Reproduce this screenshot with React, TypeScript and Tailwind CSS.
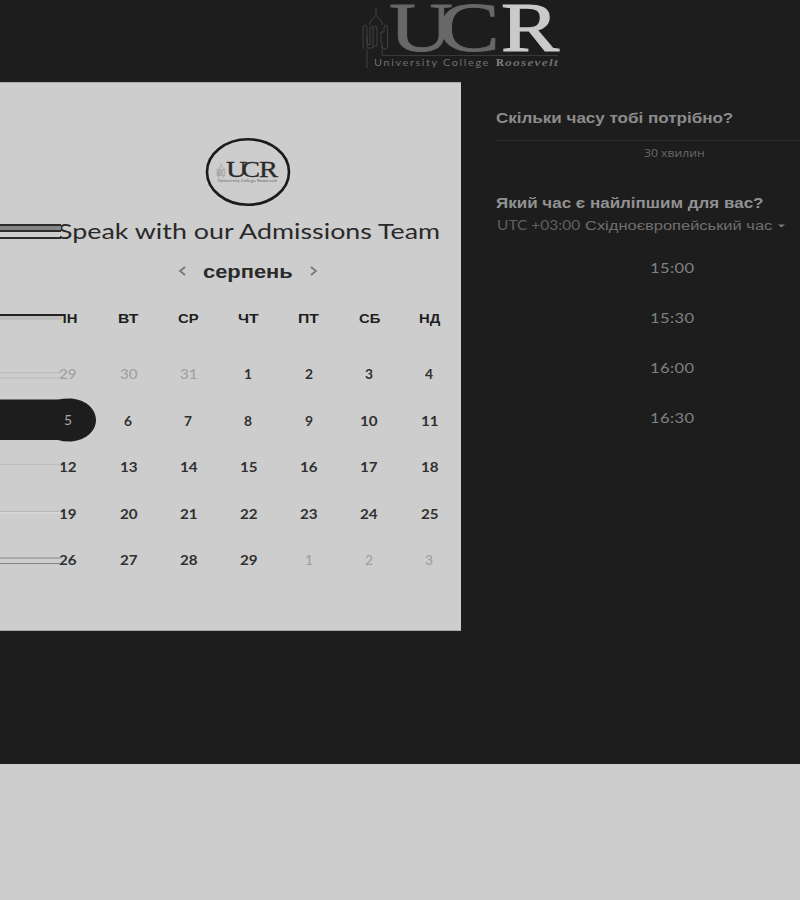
import { useLayoutEffect, useRef, useState } from 'react';
import type { ReactNode } from 'react';

/** Single line of text stretched horizontally to a given width. */
function Fit({ w, className = '', children }: { w: number; className?: string; children: ReactNode }) {
  const ref = useRef<HTMLSpanElement>(null);
  const [scale, setScale] = useState(1);
  useLayoutEffect(() => {
    if (ref.current) setScale(w / ref.current.offsetWidth);
  }, [w]);
  return (
    <span className={`block shrink-0 ${className}`} style={{ width: w }}>
      <span ref={ref} className="inline-block origin-left whitespace-nowrap" style={{ transform: `scaleX(${scale})` }}>
        {children}
      </span>
    </span>
  );
}

const latin = "font-['Lato','Liberation_Sans',sans-serif]";
const cyr = "font-['Liberation_Sans',sans-serif]";

const weekdays = ['ПН', 'ВТ', 'СР', 'ЧТ', 'ПТ', 'СБ', 'НД'];
const weeks = [
  [29, 30, 31, 1, 2, 3, 4],
  [5, 6, 7, 8, 9, 10, 11],
  [12, 13, 14, 15, 16, 17, 18],
  [19, 20, 21, 22, 23, 24, 25],
  [26, 27, 28, 29, 1, 2, 3],
];
const times = ['15:00', '15:30', '16:00', '16:30'];

function Tower() {
  return (
    <g fill="none" strokeWidth="1">
      <path d="M26 7v9M20 25v-3q1-2 3-3l3-4 3 4q2 1 3 3v3" />
      <path d="M17 68V50M15 49q-2-1-2-4V29q0-4 2-4t2 4v13q0 3 3 3V28q0-2 1.500-2t1.500 2v20h-6V37" />
      <path d="M23 46h4V28q0-2-1.500-2T24 28M31 43V32h3v-4q0-3 1.500-3t2 3v18q0 3-2.500 3t-3-3M32 43v12" />
    </g>
  );
}

function HeaderLogo() {
  return (
    <svg className="ml-[350px] block" width="220" height="82" viewBox="0 0 220 82">
      <g stroke="#424242"><Tower /></g>
      <path d="M32 55.500H208" stroke="#393939" />
      <g className="font-['Liberation_Serif',serif]" fontSize="70">
        <text x="39" y="51" textLength="64" fill="#686868" stroke="#686868" strokeWidth="0.800" lengthAdjust="spacingAndGlyphs">U</text>
        <text x="88" y="51" textLength="62" fill="#686868" stroke="#686868" strokeWidth="0.800" lengthAdjust="spacingAndGlyphs">C</text>
        <text x="151" y="51" textLength="58" fill="#cacaca" stroke="#cacaca" strokeWidth="1.200" lengthAdjust="spacingAndGlyphs">R</text>
      </g>
      <text x="24" y="66" className="font-['Lato',sans-serif]" fontSize="10" letterSpacing="1.500" textLength="116" lengthAdjust="spacingAndGlyphs" fill="#707070">University College</text>
      <text x="146" y="66" className="font-['Liberation_Serif',serif]" fontSize="11" fontWeight="700" fill="#858585">R</text>
      <text x="155" y="66" className="font-['Liberation_Serif',serif]" fontSize="11" fontStyle="italic" fontWeight="700" letterSpacing="1" textLength="54" lengthAdjust="spacingAndGlyphs" fill="#707070">oosevelt</text>
    </svg>
  );
}

function BadgeLogo() {
  return (
    <svg className="block" width="86" height="70" viewBox="0 0 86 70">
      <ellipse cx="43" cy="35" rx="41" ry="32.700" fill="none" stroke="#1b1b1b" strokeWidth="2.600" />
      <g transform="translate(8 24) scale(.31)" stroke="#666" strokeWidth="2"><Tower /></g>
      <g className="font-['Liberation_Serif',serif]" fontSize="22.500" fill="#2b2b2b" stroke="#2b2b2b" strokeWidth="0.300">
        <text x="21" y="39.500" textLength="21" lengthAdjust="spacingAndGlyphs">U</text>
        <text x="36.500" y="39.500" textLength="18.500" lengthAdjust="spacingAndGlyphs">C</text>
        <text x="54" y="39.500" textLength="19" lengthAdjust="spacingAndGlyphs">R</text>
      </g>
      <text x="14" y="44.500" className="font-['Lato',sans-serif]" fontSize="3.500" textLength="58" lengthAdjust="spacingAndGlyphs" fill="#666">University College Roosevelt</text>
    </svg>
  );
}

/** Streaks that run from the left edge of the card into its first column. */
function Streaks() {
  return (
    <svg className="absolute left-0 top-0" width="100" height="549" viewBox="0 83 100 549">
      <rect x="0" y="224" width="60" height="15" fill="#cdcdcd" />
      <rect x="0" y="224" width="61" height="8" fill="#2b2b2b" />
      <rect x="0" y="226" width="61" height="4" fill="#858585" />
      <rect x="0" y="237" width="61" height="2" fill="#2b2b2b" />
      <rect x="0" y="310" width="62" height="15" fill="#cdcdcd" />
      <rect x="0" y="314" width="64" height="2" fill="#222" />
      <rect x="0" y="316" width="62" height="4" fill="#bdbdbd" />
      <path d="M0 372.500H61M0 378H61" stroke="#b8b8b8" />
      <path d="M0 464.500H61" stroke="#bcbcbc" />
      <path d="M0 511.500H61" stroke="#b7b7b7" />
      <path d="M0 513H61" stroke="#d5d5d5" strokeWidth="2" />
      <path d="M0 558H61" stroke="#aaa" strokeWidth="2" />
      <path d="M0 563.500H61" stroke="#858585" />
    </svg>
  );
}

function dateStyle(row: number, value: number) {
  if (value === 5) return 'top-[-1px] text-[#a8a8a8]';
  if (row === 0 && value > 20) return 'text-[#a0a0a0] font-medium';
  if (row === 4 && value < 20) return 'text-[#a0a0a0] font-medium';
  return 'text-[#303030] font-bold';
}

function Calendar() {
  return (
    <section className="relative h-[549px] w-[461px] shrink-0 overflow-hidden border-y border-[#aaaaaa] bg-[#cdcdcd]">
      <div className="ml-[205px] mt-[54px] h-[70px]"><BadgeLogo /></div>
      <div className="ml-[58px] mt-[10px] flex h-7 items-center">
        <Fit w={382} className={`${latin} text-[21px] leading-7 text-[#292929]`}>Speak with our Admissions Team</Fit>
      </div>
      <div className="ml-[178px] mt-[12px] flex h-7 items-center">
        <svg width="8" height="10" viewBox="0 0 8 10" fill="none" stroke="#777" strokeWidth="1.700"><path d="M7 1L2 5l5 4" /></svg>
        <Fit w={90} className={`ml-[17px] mt-px ${cyr} text-[18px] font-bold leading-7 text-[#2a2a2a]`}>серпень</Fit>
        <svg className="ml-[17px]" width="8" height="10" viewBox="0 0 8 10" fill="none" stroke="#777" strokeWidth="1.700"><path d="M1 1l5 4-5 4" /></svg>
      </div>
      <div className="ml-[38px] mt-[24px] grid h-[20px] w-[421.400px] grid-cols-7">
        {weekdays.map((d) => (
          <div key={d} className={`flex items-center justify-center ${d === 'ПН' ? '-translate-x-0.5' : ''}`}>
            <Fit w={21} className={`${cyr} text-[12px] font-bold leading-5 text-[#1e1e1e]`}>{d}</Fit>
          </div>
        ))}
      </div>
      <div className="ml-[38px] mt-[22px] grid w-[421.400px] grid-cols-7">
        {weeks.map((week, r) =>
          week.map((n, c) => (
            <div key={`${r}-${c}`} className="relative flex h-[46.500px] items-center justify-center">
              {n === 5 && (
                <svg className="absolute left-[-38px] top-[0px]" width="98" height="44" viewBox="0 0 98 44">
                  <path d="M0 1.500H58Q63 .5 69 .5C84 .5 96 10 96 22S84 43.500 69 43.500Q63 43.500 58 42H0Z" fill="#1d1d1d" />
                </svg>
              )}
              <Fit w={n < 10 ? 8.5 : 17.5} className={`relative ${latin} text-[13px] leading-5 ${dateStyle(r, n)}`}>{n}</Fit>
            </div>
          )),
        )}
      </div>
      <Streaks />
    </section>
  );
}

function Booking() {
  return (
    <aside className="ml-[35px] w-[352px] shrink-0 pt-[26px]">
      <Fit w={237} className={`${cyr} h-5 text-[14px] font-bold leading-5 text-[#8c8c8c]`}>Скільки часу тобі потрібно?</Fit>
      <div className="mt-[12px] flex h-[26px] justify-center border-t border-[#2b2b2b] pl-1">
        <Fit w={61} className="font-['Open_Sans',sans-serif] mt-[2px] text-[11px] leading-5 text-[#686868]">30 хвилин</Fit>
      </div>
      <Fit w={267} className={`${cyr} mt-[27px] h-5 text-[14px] font-bold leading-5 text-[#929292]`}>Який час є найліпшим для вас?</Fit>
      <div className="ml-[1px] mt-[2px] flex h-5 items-center">
        <Fit w={83} className={`${latin} mt-px text-[12.500px] leading-5 text-[#606060]`}>UTC +03:00</Fit>
        <Fit w={187} className={`${cyr} ml-[5px] mt-px text-[12.500px] leading-5 text-[#707070]`}>Східноєвропейський час</Fit>
        <svg className="ml-[6px] mt-[2px]" width="8" height="4" viewBox="0 0 8 4"><path d="M0 .5h7L3.500 3.500z" fill="#777" /></svg>
      </div>
      <div className="mt-[8px]">
        {times.map((t) => (
          <div key={t} className="flex h-[50px] items-center justify-center">
            <Fit w={44} className={`${latin} text-[13.500px] leading-5 tracking-wide text-[#818181]`}>{t}</Fit>
          </div>
        ))}
      </div>
    </aside>
  );
}

export default function App() {
  return (
    <div className="h-[900px] w-[800px] overflow-hidden bg-[#cdcdcd]">
      <div className="h-[764px] overflow-hidden bg-[#1d1d1d]">
        <header className="h-[82px]"><HeaderLogo /></header>
        <main className="flex">
          <Calendar />
          <Booking />
        </main>
      </div>
    </div>
  );
}
